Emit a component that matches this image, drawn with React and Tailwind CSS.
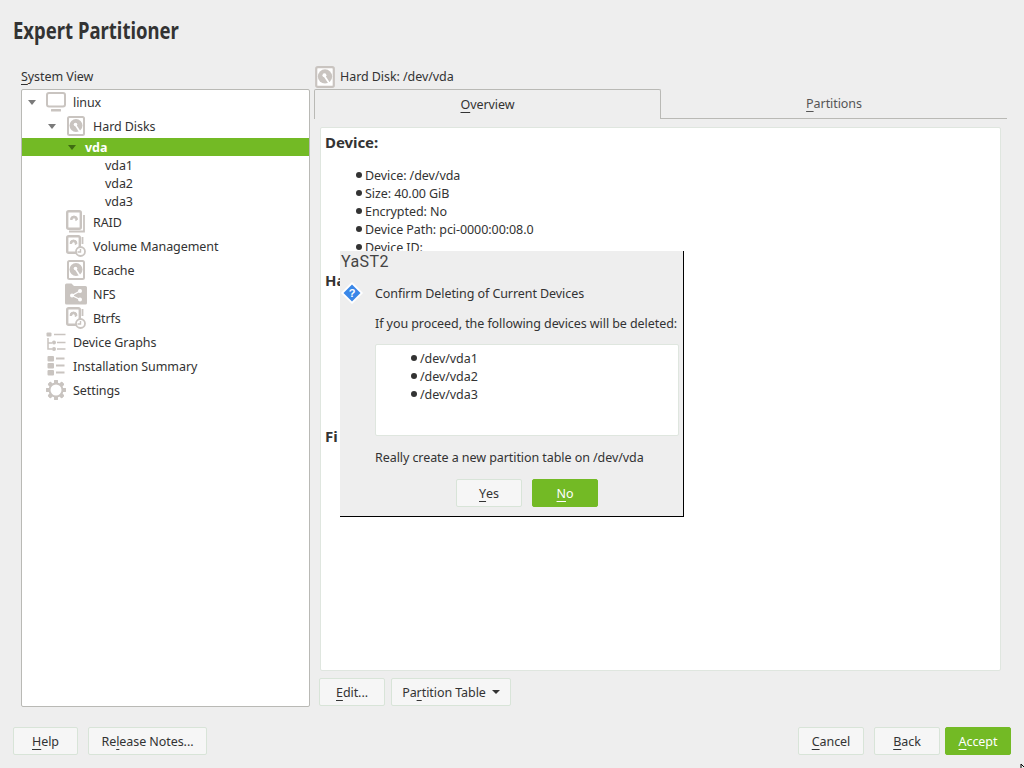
const G = "#c9c4c0";

function Arrow({ dark }) {
  return (
    <svg width="8" height="5" viewBox="0 0 8 5" className="shrink-0">
      <path d="M0 0h8L4 5z" fill={dark ? "#3f6b12" : "#7a7a7a"} />
    </svg>
  );
}

function Disk({ w = 18, h = 20 }) {
  return (
    <svg width={w} height={h} viewBox="0 0 18 20" className="shrink-0">
      <rect x="1" y="1" width="16" height="18" rx="1.500" fill="#fff" stroke={G} strokeWidth="2" />
      <circle cx="9" cy="9.500" r="6.500" fill={G} />
      <path d="M8.500 9l4.500 7" stroke="#fff" strokeWidth="1.600" />
      <circle cx="8.500" cy="8.500" r="1.800" fill="#fff" />
    </svg>
  );
}

function Raid() {
  return (
    <svg width="20" height="24" viewBox="0 0 20 24" className="shrink-0">
      <path d="M3 21.500h15V5" fill="none" stroke={G} strokeWidth="1.800" />
      <rect x="1.200" y="1.200" width="13.600" height="17.600" rx="1.500" fill="#fff" stroke={G} strokeWidth="2.400" />
      <path d="M4.500 9.500a3.500 3.500 0 0 1 7 0l-1.800 1V9.500a1.700 1.700 0 0 0-3.400 0z" fill={G} stroke={G} strokeWidth="1" />
    </svg>
  );
}

function DiskClock() {
  return (
    <svg width="20" height="22" viewBox="0 0 20 22" className="shrink-0">
      <rect x="1.200" y="1.200" width="12.600" height="16.600" rx="1.500" fill="#fff" stroke={G} strokeWidth="2.400" />
      <path d="M4 8.500a3.500 3.500 0 0 1 7 0l-1.800 1V8.500a1.700 1.700 0 0 0-3.400 0z" fill={G} stroke={G} strokeWidth="1" />
      <path d="M16.500 2v7" stroke={G} strokeWidth="1.800" />
      <circle cx="14.500" cy="16.500" r="4.500" fill="#fff" stroke={G} strokeWidth="1.800" />
      <path d="M14.500 14v3h-3" fill="none" stroke={G} strokeWidth="1.400" />
    </svg>
  );
}

function Nfs() {
  return (
    <svg width="22" height="22" viewBox="0 0 22 22" className="shrink-0">
      <path d="M0 2A1.500 1.500 0 0 1 1.500.5h5L9 3h11.500A1.500 1.500 0 0 1 22 4.500V20a1.500 1.500 0 0 1-1.500 1.500h-19A1.500 1.500 0 0 1 0 20z" fill={G} />
      <path d="M15 8l-8 4.500 8 4" fill="none" stroke="#fff" strokeWidth="1.300" />
      <circle cx="15" cy="8" r="2" fill="#fff" />
      <circle cx="7" cy="12.500" r="2" fill="#fff" />
      <circle cx="15" cy="16.500" r="2" fill="#fff" />
    </svg>
  );
}

function Graphs() {
  return (
    <svg width="20" height="20" viewBox="0 0 20 20" className="shrink-0">
      <rect x="0.500" y="0.500" width="5" height="4" rx="1" fill={G} />
      <path d="M8 2.500h11.500M2 6v11h4M2 11h4M11 10.500h8.500M11 17h8.500" fill="none" stroke={G} strokeWidth="1.500" />
      <circle cx="8" cy="10.500" r="2" fill={G} />
      <circle cx="8" cy="17" r="2" fill={G} />
    </svg>
  );
}

function Summary() {
  return (
    <svg width="18" height="20" viewBox="0 0 18 20" className="shrink-0">
      <rect x="0.500" y="0" width="6.500" height="5.500" rx="1" fill={G} />
      <rect x="0.500" y="7" width="6.500" height="5.500" rx="1" fill={G} />
      <rect x="0.500" y="14" width="6.500" height="5.500" rx="1" fill={G} />
      <path d="M9 2.500h8.500M9 9.500h8.500M9 16.500h8.500" stroke={G} strokeWidth="2.200" />
    </svg>
  );
}

function Gear() {
  const teeth = [0, 45, 90, 135, 180, 225, 270, 315];
  return (
    <svg width="20" height="20" viewBox="0 0 20 20" className="shrink-0">
      {teeth.map((a) => (
        <rect key={a} x="8" y="0" width="4" height="20" rx="1" fill={G} transform={`rotate(${a} 10 10)`} />
      ))}
      <circle cx="10" cy="10" r="7.500" fill={G} />
      <circle cx="10" cy="10" r="5.500" fill="#fff" />
    </svg>
  );
}

function Monitor() {
  return (
    <svg width="20" height="20" viewBox="0 0 20 20" className="shrink-0">
      <rect x="1" y="1" width="18" height="13.500" rx="2" fill="#fff" stroke={G} strokeWidth="2" />
      <rect x="5" y="17" width="10" height="2.500" rx="0.500" fill={G} />
    </svg>
  );
}

function Row({ pad, arrow, icon, label }) {
  return (
    <div className={`flex items-center h-6 ${pad}`}>
      <span className="w-[8px] shrink-0 flex items-center">{arrow && <Arrow />}</span>
      <span className="w-[20px] ml-[10px] shrink-0 flex items-center justify-center">{icon}</span>
      <span className="ml-[7px] whitespace-nowrap pt-[2px]">{label}</span>
    </div>
  );
}

function Btn({ children, w, green, className = "" }) {
  const tone = green
    ? "bg-[#73ba25] border-[#73ba25] text-white"
    : "bg-[#f6f6f6] border-[#d8e4d8] text-[#333333]";
  return (
    <div className={`h-[28px] ${w} border rounded-[2px] flex items-center justify-center whitespace-nowrap pt-[2px] ${tone} ${className}`}>
      {children}
    </div>
  );
}

function U({ children }) {
  return <span className="underline underline-offset-[3px]">{children}</span>;
}

function Li({ children }) {
  return (
    <li className="flex items-center h-[18px]">
      <span className="w-[6px] h-[6px] rounded-full bg-[#333333] mr-[3px] shrink-0" />
      <span className="whitespace-nowrap pt-[2px]">{children}</span>
    </li>
  );
}

export default function App() {
  return (
    <div
      className="relative w-[1024px] h-[768px] overflow-hidden bg-[#eeeeee] text-[#333333] text-[12.5px] tracking-[-0.07px] flex flex-col"
      style={{ fontFamily: '"Noto Sans", sans-serif' }}
    >
      <div className="h-[65px] shrink-0 pl-[13px] pt-[15px]">
        <h1 className="text-[23px] leading-[30px] font-bold tracking-normal text-[#333333] origin-left scale-x-[0.805] whitespace-nowrap">Expert Partitioner</h1>
      </div>

      <div className="h-[642px] shrink-0 flex pl-[21px]">
        <div className="w-[289px] shrink-0 flex flex-col">
          <div className="h-[24px] shrink-0 flex items-center pt-[1px]"><span><U>S</U>ystem View</span></div>
          <div className="flex-1 bg-white border border-[#b9b9b5] rounded-[2px] overflow-hidden">
            <Row pad="pl-[6px]" arrow icon={<Monitor />} label="linux" />
            <Row pad="pl-[26px]" arrow icon={<Disk />} label="Hard Disks" />
            <div className="h-[18px] bg-[#73ba25] flex items-center pl-[46px] text-white font-bold">
              <Arrow dark />
              <span className="ml-[9px] pt-[2px]">vda</span>
            </div>
            <div className="h-[18px] flex items-center pl-[83px] pt-[2px]">vda1</div>
            <div className="h-[18px] flex items-center pl-[83px] pt-[2px]">vda2</div>
            <div className="h-[18px] flex items-center pl-[83px] pt-[2px]">vda3</div>
            <Row pad="pl-[26px]" icon={<Raid />} label="RAID" />
            <Row pad="pl-[26px]" icon={<DiskClock />} label="Volume Management" />
            <Row pad="pl-[26px]" icon={<Disk />} label="Bcache" />
            <Row pad="pl-[26px]" icon={<Nfs />} label="NFS" />
            <Row pad="pl-[26px]" icon={<DiskClock />} label="Btrfs" />
            <Row pad="pl-[6px]" icon={<Graphs />} label="Device Graphs" />
            <Row pad="pl-[6px]" icon={<Summary />} label="Installation Summary" />
            <Row pad="pl-[6px]" icon={<Gear />} label="Settings" />
          </div>
        </div>

        <div className="w-[693px] ml-[4px] shrink-0 flex flex-col">
          <div className="h-[24px] shrink-0 flex items-center pl-[1px]">
            <Disk w={20} h={22} />
            <span className="ml-[5px] pt-[1px]">Hard Disk: /dev/vda</span>
          </div>
          <div className="h-[30px] shrink-0 flex">
            <div className="w-[347px] border border-b-0 border-[#b9b9b5] rounded-t-[2px] flex items-center justify-center pt-[2px]">
              <span><U>O</U>verview</span>
            </div>
            <div className="flex-1 border-b border-[#b9b9b5] flex items-center justify-center pt-[1px] text-[#555555]">
              <span><U>P</U>artitions</span>
            </div>
          </div>
          <div className="h-[544px] shrink-0 mt-[8px] ml-[6px] w-[681px] bg-white border border-[#dfe6df] rounded-[2px] px-[4px] overflow-hidden">
            <div className="text-[15px] leading-[20px] font-bold mt-[4px]">Device:</div>
            <ul className="mt-[14px] pl-[31px]">
              <Li>Device: /dev/vda</Li>
              <Li>Size: 40.00 GiB</Li>
              <Li>Encrypted: No</Li>
              <Li>Device Path: pci-0000:00:08.0</Li>
              <Li>Device ID:</Li>
            </ul>
            <div className="text-[15px] leading-[20px] font-bold mt-[14px]">Ha</div>
            <div className="text-[15px] leading-[20px] font-bold mt-[136px]">Fi</div>
          </div>
          <div className="flex mt-[7px] ml-[5px] gap-[6px]">
            <Btn w="w-[66px]"><U>E</U>dit...</Btn>
            <Btn w="w-[120px]">
              <span>Pa<U>r</U>tition Table</span>
              <span className="ml-[6px] pb-[2px]"><svg width="8" height="4" viewBox="0 0 8 4"><path d="M0 0h8L4 4z" fill="#333333" /></svg></span>
            </Btn>
          </div>
        </div>
      </div>

      <div className="mt-[20px] flex px-[13px]">
        <Btn w="w-[65px]"><U>H</U>elp</Btn>
        <Btn w="w-[119px]" className="ml-[10px]">Re<U>l</U>ease Notes...</Btn>
        <Btn w="w-[66px]" className="ml-auto"><U>C</U>ancel</Btn>
        <Btn w="w-[66px]" className="ml-[10px]"><U>B</U>ack</Btn>
        <Btn w="w-[66px]" green className="ml-[5px]"><U>A</U>ccept</Btn>
      </div>

      <div className="absolute left-[340px] top-[251px] w-[344px] h-[266px] bg-[#eeeeee] border-r border-b border-black pl-[1px]">
        <div className="absolute left-0 bottom-[-1px] w-[1px] h-[1px] bg-black" />
        <div className="h-[21px] leading-[21px] text-[16px] tracking-[0.4px] text-[#444444]" style={{ fontFamily: "Roboto, sans-serif" }}>YaST2</div>
        <div className="flex h-[30px] items-center mt-[6px]">
          <svg width="22" height="22" viewBox="0 0 22 22" className="shrink-0">
            <path d="M11 0l11 11-11 11L0 11z" fill="#fff" />
            <path d="M11 2.500L19.500 11 11 19.500 2.500 11z" fill="#3a87e8" />
            <text x="11" y="15" textAnchor="middle" fontSize="11" fontWeight="700" fill="#fff" fontFamily="Liberation Sans, sans-serif">?</text>
          </svg>
          <span className="ml-[12px] whitespace-nowrap pt-[2px]">Confirm Deleting of Current Devices</span>
        </div>
        <div className="h-[30px] flex items-center ml-[34px] whitespace-nowrap pt-[2px]">If you proceed, the following devices will be deleted:</div>
        <div className="ml-[34px] mt-[6px] w-[304px] h-[92px] bg-white border border-[#dfe6df] rounded-[2px] pt-[4px] pl-[35px]">
          <ul>
            <Li>/dev/vda1</Li>
            <Li>/dev/vda2</Li>
            <Li>/dev/vda3</Li>
          </ul>
        </div>
        <div className="h-[20px] mt-[11px] flex items-center ml-[34px] whitespace-nowrap pt-[2px]">Really create a new partition table on /dev/vda</div>
        <div className="flex mt-[12px] ml-[115px] gap-[10px]">
          <Btn w="w-[66px]"><U>Y</U>es</Btn>
          <Btn w="w-[66px]" green><U>N</U>o</Btn>
        </div>
      </div>

      <svg width="4" height="4" viewBox="0 0 4 4" className="absolute left-[1020px] top-[764px]">
        <path d="M1 0v4M1 0l3 3" stroke="#000" strokeWidth="1" />
      </svg>
    </div>
  );
}
